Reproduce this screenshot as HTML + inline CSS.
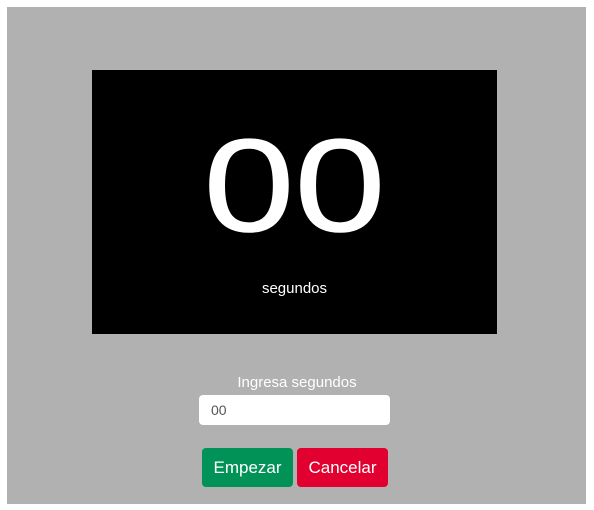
<!DOCTYPE html>
<html><head><style>
body{margin:0;background:#fff;width:594px;height:510px;position:relative;font-family:"Liberation Sans",Arial,sans-serif;overflow:hidden}
.g{position:absolute;left:7px;top:7px;width:579px;height:497px;background:#b1b1b1}
.b{position:absolute;left:92px;top:70px;width:405px;height:264px;background:#000;color:#fff;text-align:center}
.n{position:absolute;left:0;right:0;top:50px;font-size:132px;line-height:132px;transform:scaleX(1.24);transform-origin:center;-webkit-text-stroke:1px #fff}
.s{position:absolute;left:0;right:0;top:210px;font-size:15px}
.l{position:absolute;left:0;width:594px;top:374px;text-align:center;color:#fff;font-size:15px}
.i{position:absolute;left:199px;top:395px;width:191px;height:30px;background:#fff;border-radius:4px;box-sizing:border-box;padding-left:12px;line-height:30px;color:#555;font-size:14px}
.btn{position:absolute;top:448px;height:39px;border-radius:4px;color:#fff;font-size:17px;line-height:39px;text-align:center}
</style></head><body>
<div class="g"></div>
<div class="b"><div class="n">00</div><div class="s">segundos</div></div>
<div class="l">Ingresa segundos</div>
<div class="i">00</div>
<div class="btn" style="left:202px;width:91px;background:#009256">Empezar</div>
<div class="btn" style="left:297px;width:91px;background:#e1002f">Cancelar</div>
</body></html>
